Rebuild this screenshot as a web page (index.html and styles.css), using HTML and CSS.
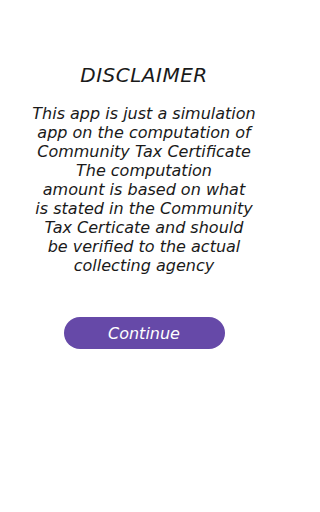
FILE: index.html
```html
<!DOCTYPE html>
<html>
<head>
<meta charset="utf-8">
<link rel="stylesheet" href="styles.css">
</head>
<body>
<main class="screen">
  <h1 class="title">DISCLAIMER</h1>
  <p class="text">This app is just a simulation<br>app on the computation of<br>Community Tax Certificate<br>The computation<br>amount is based on what<br>is stated in the Community<br>Tax Certicate and should<br>be verified to the actual<br>collecting agency</p>
  <button class="btn">Continue</button>
</main>
</body>
</html>
```
FILE: styles.css
```css
html, body {
  margin: 0;
  padding: 0;
  background: #ffffff;
}
.screen {
  width: 288px;
  height: 512px;
  display: flex;
  flex-direction: column;
  align-items: center;
  font-family: "DejaVu Sans", sans-serif;
  font-style: italic;
  color: #1a1a1a;
}
.title {
  margin: 63px 0 0 0;
  font-size: 20px;
  font-weight: normal;
  line-height: 24px;
  letter-spacing: 0.5px;
}
.text {
  margin: 17px 0 0 0;
  font-size: 16px;
  line-height: 19px;
  text-align: center;
}
.btn {
  margin-top: 42px;
  width: 161px;
  height: 32px;
  border: none;
  border-radius: 16px;
  background: #6649a8;
  color: #ffffff;
  font-family: "DejaVu Sans", sans-serif;
  font-style: italic;
  font-size: 16px;
  padding: 0;
}
```
